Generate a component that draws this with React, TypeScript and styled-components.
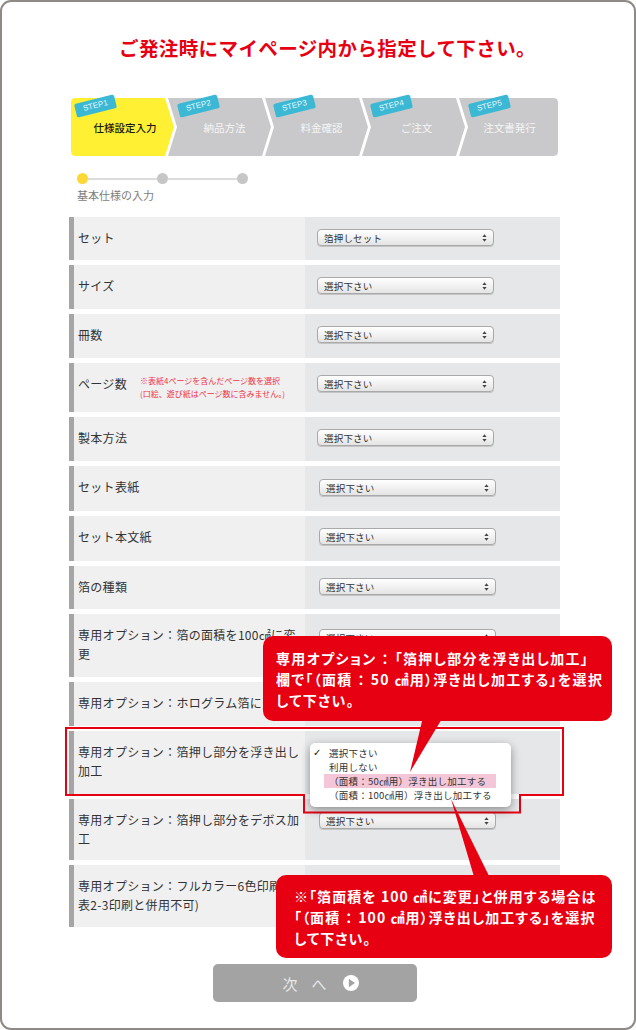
import styled, { createGlobalStyle } from "styled-components";

const red = "#e60012";
const jp = `"Noto Sans CJK JP", "Noto Sans", sans-serif`;

const GlobalStyle = createGlobalStyle`
  html, body {
    margin: 0;
    padding: 0;
    background: #fff;
  }
  body {
    font-family: ${jp};
  }
`;

const Page = styled.div`
  position: relative;
  box-sizing: border-box;
  width: 636px;
  height: 1030px;
  border: 2px solid #8f8a86;
  border-radius: 11px;
  background: #fff;
  overflow: hidden;
`;

const Title = styled.h1`
  margin: 0;
  padding-top: 33px;
  padding-left: 117px;
  font-size: 19.5px;
  line-height: 26px;
  font-weight: 700;
  letter-spacing: 0.4px;
  color: ${red};
  white-space: nowrap;
`;

const Steps = styled.div`
  display: flex;
  margin: 37px 0 0 69px;
`;

const Step = styled.div<{ $w: number; $first?: boolean }>`
  position: relative;
  flex: none;
  width: ${(p) => p.$w}px;
  height: 58px;
  margin-left: ${(p) => (p.$first ? 0 : -6)}px;
`;

const firstShape =
  "polygon(4px 0, calc(100% - 9px) 0, 100% 50%, calc(100% - 9px) 100%, 4px 100%, 1px calc(100% - 1px), 0 calc(100% - 4px), 0 4px, 1px 1px)";
const midShape =
  "polygon(0 0, calc(100% - 9px) 0, 100% 50%, calc(100% - 9px) 100%, 0 100%, 9px 50%)";
const lastShape =
  "polygon(0 0, calc(100% - 4px) 0, calc(100% - 1px) 1px, 100% 4px, 100% calc(100% - 4px), calc(100% - 1px) calc(100% - 1px), calc(100% - 4px) 100%, 0 100%, 9px 50%)";

const Chevron = styled.div<{ $kind: "first" | "mid" | "last"; $pad: number }>`
  display: flex;
  align-items: center;
  justify-content: center;
  box-sizing: border-box;
  height: 100%;
  padding-left: ${(p) => p.$pad}px;
  background: ${(p) => (p.$kind === "first" ? "#fff033" : "#c9c9cb")};
  color: ${(p) => (p.$kind === "first" ? "#1a1a1a" : "#f5f5f5")};
  font-size: 10.5px;
  font-weight: ${(p) => (p.$kind === "first" ? 500 : 400)};
  clip-path: ${(p) =>
    p.$kind === "first" ? firstShape : p.$kind === "last" ? lastShape : midShape};
`;

const StepBadge = styled.span<{ $left: number }>`
  position: absolute;
  top: 1px;
  left: ${(p) => p.$left}px;
  width: 41px;
  height: 14px;
  border-radius: 2px;
  background: #3bb8d4;
  color: #e6f7fb;
  font-family: "Liberation Sans", sans-serif;
  font-size: 8px;
  line-height: 14px;
  text-align: center;
  transform: rotate(-14deg);
`;

const Progress = styled.div`
  display: flex;
  align-items: center;
  margin: 17px 0 0 75px;
`;

const Dot = styled.span<{ $on?: boolean }>`
  flex: none;
  width: 11px;
  height: 11px;
  border-radius: 50%;
  background: ${(p) => (p.$on ? "#fdd835" : "#c6c6c6")};
`;

const DotLine = styled.span`
  flex: none;
  width: 69px;
  height: 2px;
  background: #dcdcdc;
`;

const ProgressLabel = styled.div`
  margin: 4px 0 0 75px;
  font-size: 11px;
  line-height: 14px;
  color: #7d7d7d;
`;

const Rows = styled.div`
  display: flex;
  flex-direction: column;
  gap: 5px;
  width: 491px;
  margin: 15px 0 0 67px;
`;

const Row = styled.div<{ $h: number }>`
  display: grid;
  grid-template-columns: 236px 255px;
  height: ${(p) => p.$h}px;
`;

const LabelCell = styled.div`
  display: flex;
  gap: 13px;
  box-sizing: border-box;
  padding: 11px 2px 0 4px;
  border-left: 5px solid #a5a5a5;
  background: #f0f0f1;
`;

const Label = styled.div`
  font-size: 12px;
  line-height: 19px;
  letter-spacing: 0.3px;
  color: #333;
`;

const Note = styled.div`
  font-size: 8px;
  line-height: 13px;
  color: #ee3344;
  white-space: nowrap;
`;

const ValueCell = styled.div<{ $shift: number; $top: number }>`
  box-sizing: border-box;
  padding: ${(p) => p.$top}px 0 0 ${(p) => p.$shift}px;
  background: #e6e7e9;
`;

const SelectBox = styled.div`
  display: flex;
  align-items: center;
  justify-content: space-between;
  box-sizing: border-box;
  width: 177px;
  height: 17px;
  padding: 0 6px;
  border: 1px solid #a9a9a9;
  border-radius: 4px;
  background: linear-gradient(#ffffff, #f2f2f2 50%, #e4e4e4);
  box-shadow: 0 1px 0 #c4c4c4;
  font-size: 9.5px;
  letter-spacing: 0.2px;
  color: #333;
`;

const Footer = styled.div`
  display: flex;
  justify-content: center;
  margin: 37px 0 0 211px;
  width: 204px;
`;

const NextButton = styled.button`
  display: flex;
  align-items: center;
  justify-content: center;
  gap: 16px;
  box-sizing: border-box;
  width: 204px;
  height: 38px;
  padding: 0 0 0 11px;
  border: none;
  border-radius: 5px;
  background: #a3a3a3;
  color: #e8e8e8;
  font-family: ${jp};
  font-size: 15px;
`;

const NextText = styled.span`
  letter-spacing: 14px;
  margin-right: -14px;
`;

const Highlight = styled.svg`
  position: absolute;
  left: 0;
  top: 0;
  pointer-events: none;
`;

const Dropdown = styled.div`
  position: absolute;
  left: 308px;
  top: 741px;
  box-sizing: border-box;
  width: 201px;
  height: 64px;
  padding-top: 3px;
  border-radius: 5px;
  background: #fff;
  box-shadow: 0 3px 10px rgba(0, 0, 0, 0.4);
`;

const Option = styled.div<{ $active?: boolean }>`
  position: relative;
  margin-left: 14px;
  padding-left: 5px;
  width: 172px;
  height: 14px;
  box-sizing: border-box;
  font-size: 9.5px;
  line-height: 14px;
  letter-spacing: 0.25px;
  color: #333;
  white-space: nowrap;
  background: ${(p) => (p.$active ? "#f3c6d8" : "transparent")};
`;

const Check = styled.span`
  position: absolute;
  left: -11px;
  top: 0;
  font-family: "DejaVu Sans", sans-serif;
  font-size: 10px;
  font-weight: 700;
  color: #111;
`;

const Callout = styled.div<{
  $x: number;
  $y: number;
  $w: number;
  $h: number;
  $px: number;
  $pt: number;
  $ls: number;
}>`
  position: absolute;
  left: ${(p) => p.$x}px;
  top: ${(p) => p.$y}px;
  box-sizing: border-box;
  width: ${(p) => p.$w}px;
  height: ${(p) => p.$h}px;
  padding: ${(p) => p.$pt}px 0 0 ${(p) => p.$px}px;
  border-radius: 10px;
  background: ${red};
  color: #fff;
  font-size: 14px;
  font-weight: 700;
  font-feature-settings: "palt";
  line-height: 21px;
  letter-spacing: ${(p) => p.$ls}px;
  white-space: nowrap;
`;

const Colon = styled.span`
  margin: 0 5px;
`;

const Tail = styled.svg`
  position: absolute;
  left: 0;
  top: 0;
  pointer-events: none;
`;

const Arrows = () => (
  <svg width="5" height="8" viewBox="0 0 5 8">
    <path d="M2.5 0.3 L4.6 3 H0.4 Z M2.5 7.7 L0.4 5 H4.6 Z" fill="#444" />
  </svg>
);

const rows = [
  { label: "セット", value: "箔押しセット", h: 43, shift: 12, top: 12 },
  { label: "サイズ", value: "選択下さい", h: 44, shift: 12, top: 12 },
  { label: "冊数", value: "選択下さい", h: 44, shift: 12, top: 12 },
  { label: "ページ数", value: "選択下さい", h: 49, shift: 12, top: 12, note: true },
  { label: "製本方法", value: "選択下さい", h: 44, shift: 12, top: 12 },
  { label: "セット表紙", value: "選択下さい", h: 45, shift: 14, top: 13 },
  { label: "セット本文紙", value: "選択下さい", h: 45, shift: 14, top: 12 },
  { label: "箔の種類", value: "選択下さい", h: 43, shift: 14, top: 12 },
  { label: "専用オプション：箔の面積を100㎠に変更", value: "選択下さい", h: 63, shift: 14, top: 15 },
  { label: "専用オプション：ホログラム箔に変更", value: "選択下さい", h: 44, shift: 14, top: 12 },
  { label: "専用オプション：箔押し部分を浮き出し加工", value: "選択下さい", h: 63, shift: 14, top: 12 },
  { label: "専用オプション：箔押し部分をデボス加工", value: "選択下さい", h: 61, shift: 14, top: 13 },
  { label: "専用オプション：フルカラー6色印刷(裏表2-3印刷と併用不可)", value: "選択下さい", h: 62, shift: 14, top: 12 },
];

const steps = [
  { name: "仕様設定入力", tag: "STEP1", w: 103, kind: "first" as const, pad: 5, badge: 4 },
  { name: "納品方法", tag: "STEP2", w: 103, kind: "mid" as const, pad: 10, badge: 10 },
  { name: "料金確認", tag: "STEP3", w: 103, kind: "mid" as const, pad: 10, badge: 9 },
  { name: "ご注文", tag: "STEP4", w: 103, kind: "mid" as const, pad: 6, badge: 9 },
  { name: "注文書発行", tag: "STEP5", w: 99, kind: "last" as const, pad: 2, badge: 10 },
];

export default function App() {
  return (
    <>
      <GlobalStyle />
      <Page>
        <Title>ご発注時にマイページ内から指定して下さい。</Title>

        <Steps>
          {steps.map((s, i) => (
            <Step key={s.tag} $w={s.w} $first={i === 0}>
              <Chevron $kind={s.kind} $pad={s.pad}>{s.name}</Chevron>
              <StepBadge $left={s.badge}>{s.tag}</StepBadge>
            </Step>
          ))}
        </Steps>

        <Progress>
          <Dot $on />
          <DotLine />
          <Dot />
          <DotLine />
          <Dot />
        </Progress>
        <ProgressLabel>基本仕様の入力</ProgressLabel>

        <Rows>
          {rows.map((r) => (
            <Row key={r.label} $h={r.h}>
              <LabelCell>
                <Label>{r.label}</Label>
                {r.note && (
                  <Note>
                    ※表紙4ページを含んだページ数を選択
                    <br />
                    (口絵、遊び紙はページ数に含みません。)
                  </Note>
                )}
              </LabelCell>
              <ValueCell $shift={r.shift} $top={r.top}>
                <SelectBox>
                  {r.value}
                  <Arrows />
                </SelectBox>
              </ValueCell>
            </Row>
          ))}
        </Rows>

        <Footer>
          <NextButton>
            <NextText>次へ</NextText>
            <svg width="16" height="16" viewBox="0 0 16 16">
              <circle cx="8" cy="8" r="8" fill="#fff" />
              <path d="M5.8 3.8 L12 8 L5.8 12.2 Z" fill="#a3a3a3" />
            </svg>
          </NextButton>
        </Footer>

        {/* selected row outline, notched around the open dropdown */}
        <Highlight width="632" height="1026">
          <path
            d="M64 726 H561 V793 H518 V810.5 H302 V793 H64 Z"
            fill="none"
            stroke={red}
            strokeWidth="2"
          />
        </Highlight>

        <Dropdown>
          <Option>
            <Check>✓</Check>選択下さい
          </Option>
          <Option>利用しない</Option>
          <Option $active>（面積：50㎠用）浮き出し加工する</Option>
          <Option>（面積：100㎠用）浮き出し加工する</Option>
        </Dropdown>

        <Tail width="632" height="1026">
          <path d="M421 715 L441 715 L408 770 Z" fill={red} />
          <path d="M449 797 L473 878 L489 878 Z" fill={red} />
        </Tail>

        <Callout $x={261} $y={634} $w={349} $h={85} $px={13} $pt={12} $ls={1.3}>
          専用オプション<Colon>：</Colon>「箔押し部分を浮き出し加工」
          <br />
          欄で「（面積<Colon>：</Colon>50 ㎠用）浮き出し加工する」を選択
          <br />
          して下さい。
        </Callout>

        <Callout $x={274} $y={873} $w={336} $h={83} $px={18} $pt={11} $ls={1.05}>
          ※「箔面積を 100 ㎠に変更」と併用する場合は
          <br />
          「（面積<Colon>：</Colon>100 ㎠用）浮き出し加工する」を選択
          <br />
          して下さい。
        </Callout>
      </Page>
    </>
  );
}
